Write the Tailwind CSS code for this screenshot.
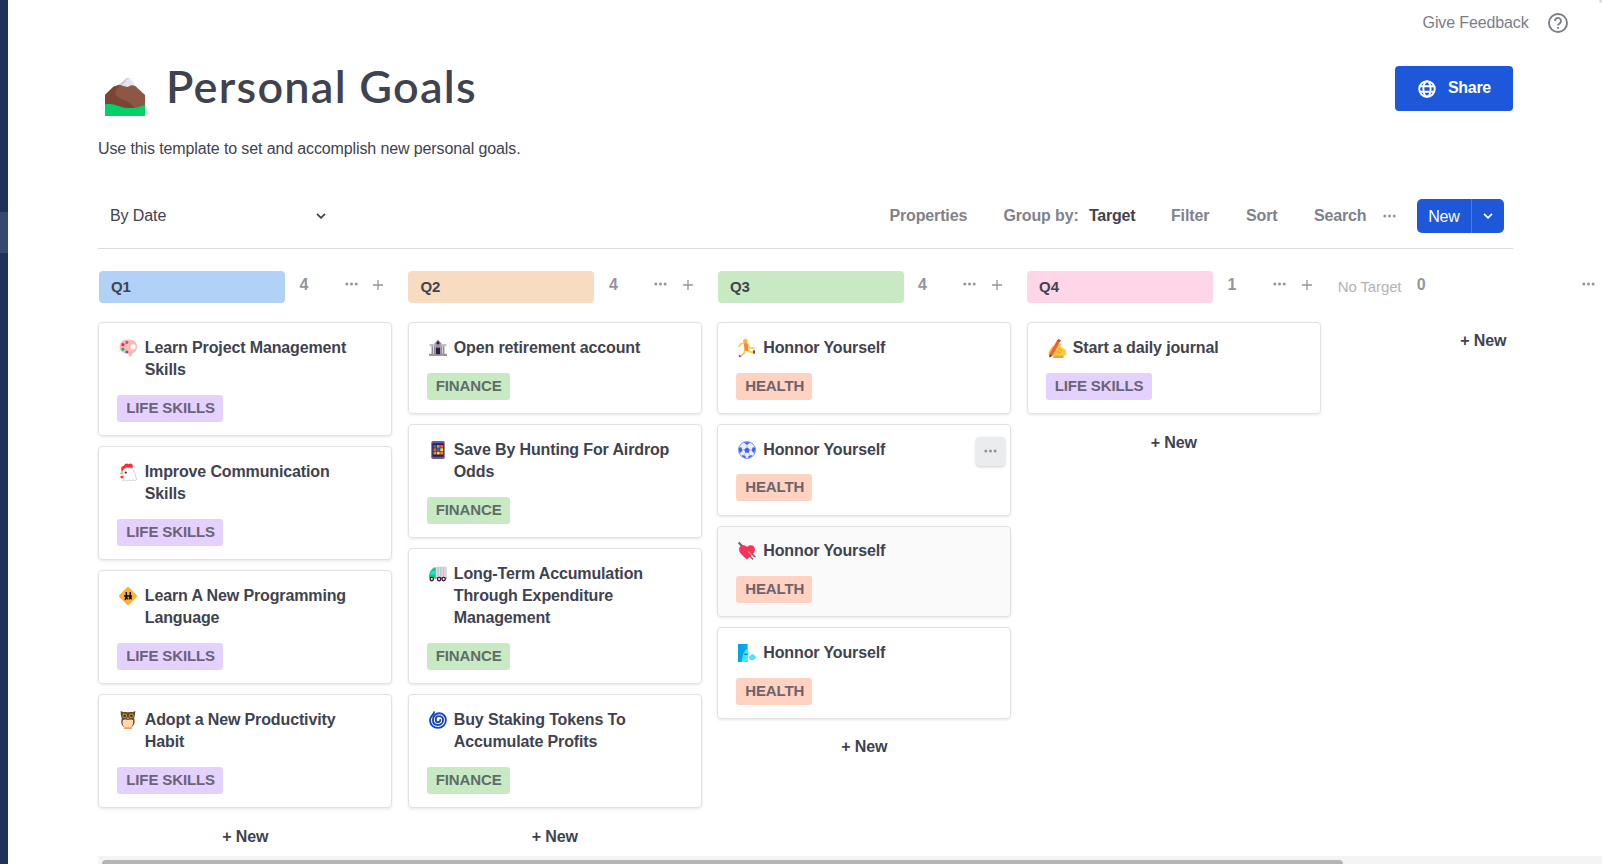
<!DOCTYPE html>
<html lang="en">
<head>
<meta charset="utf-8">
<title>Personal Goals</title>
<script src="https://cdn.jsdelivr.net/npm/@tailwindcss/browser@4"></script>
</head>
<body class="w-[1602px] h-[864px] overflow-hidden bg-white font-['Liberation_Sans',Arial,sans-serif] text-[16px] text-[#3f4350]">
<svg class="hidden" xmlns="http://www.w3.org/2000/svg">
  <symbol id="dots" viewBox="0 0 13 4"><g fill="currentColor"><circle cx="1.8" cy="2" r="1.5"/><circle cx="6.5" cy="2" r="1.5"/><circle cx="11.2" cy="2" r="1.5"/></g></symbol>
  <symbol id="plus" viewBox="0 0 10 10"><path d="M5 0v10M0 5h10" stroke="currentColor" stroke-width="1.3" fill="none"/></symbol>
  <symbol id="chev" viewBox="0 0 10 6"><path d="M1 .9l4 4 4-4" stroke="currentColor" stroke-width="1.7" fill="none"/></symbol>
  <symbol id="mountain" viewBox="0 0 39 38" preserveAspectRatio="none"><path d="M0 17 8 9 14 6.500 24 7 29 7.500 39 17V30H0z" fill="#8d5745"/><path d="M0 17 8 9l6-2-3 5c-3 5 1 7 7 10 6 2 9 5 12 10H0z" fill="#7c4434"/><path d="M14 6.500 21 .5c1-.7 2-.7 3 0L30 7.500l-4-.5-4 2-4-1z" fill="#e6e4ee"/><path d="M14 6.500 21 .5c1-.6 2-.6 3 0-2 0-3 1-4 3l-3 3z" fill="#c8c3d8"/><path d="M0 26.500c9-2 13 3 22 3.500 8 .3 12-1 17-3V38H0z" fill="#00d26a"/></symbol>
  <symbol id="palette" viewBox="0 0 32 32"><path d="M15 1C6 1 1 7 1 14c0 9 7 11 14 11 2 0 1 3 3 5 4 3 6-2 5-4 5-2 9-6 9-12C32 5 25 1 15 1z" fill="#ffb8ae"/><circle cx="25" cy="14" r="4.500" fill="#fff"/><circle cx="14" cy="6" r="2.700" fill="#8d65c5"/><circle cx="7" cy="10" r="2.700" fill="#f3148c"/><circle cx="7" cy="18" r="2.700" fill="#00c466"/><circle cx="14" cy="23" r="2.700" fill="#4a5cff"/></symbol>
  <symbol id="chicken" viewBox="0 0 32 32"><path d="M5 16C2 9 5 5 9 5c1-5 6-5 8-3 5-3 9 1 7 7l-8 4z" fill="#f92f38"/><path d="M6 15c2-5 6-7 11-7 8 0 12 8 14 22l-3 2-3-2-3 2-4-2-4 2-3-2-4 1c1-6 1-10-1-14z" fill="#fff" stroke="#b9b9bd" stroke-width="1.200"/><path d="M6 15 0 20h7z" fill="#ffb02e"/><circle cx="5" cy="25" r="2.500" fill="#f92f38"/><circle cx="12" cy="17" r="2" fill="#402a32"/></symbol>
  <symbol id="crossing" viewBox="0 0 32 32"><path d="M14 1q2-2 4 0l13 13q2 2 0 4L18 31q-2 2-4 0L1 18q-2-2 0-4z" fill="#ffb02e"/><g fill="none" stroke="#111" stroke-width="2.600"><path d="M9 16h14M13 9v7l-2 7M13 16l2 6M20 9v7l-2 6M20 15l2 7"/></g></symbol>
  <symbol id="owl" viewBox="0 0 32 32"><path d="M3 0c4 2 7 2 13 2s9 0 13-2c0 5-1 9-2 13l1 6c-1 6-4 9-7 10H11c-4-1-7-4-7-10l1-6C3 9 3 4 3 0z" fill="#6d4534"/><path d="M7 16q4-2 9 0 5-2 9 0c1 7-2 13-5 13h-8c-4 0-7-6-5-13z" fill="#ffdba8"/><circle cx="10" cy="8.500" r="4" fill="#c9ad29"/><circle cx="22" cy="8.500" r="4" fill="#c9ad29"/><circle cx="10" cy="8.500" r="2.400" fill="#333"/><circle cx="22" cy="8.500" r="2.400" fill="#333"/><path d="m16 10 2 4h-4zM9 29h14v3H9z" fill="#ff9a62"/></symbol>
  <symbol id="bank" viewBox="0 0 32 32"><path d="M10 8l6-7 6 7v3H10z" fill="#998ea4"/><path d="M1 9h30v4H1z" fill="#bebec2"/><path d="M4 13h24v14H4z" fill="#d4d3d6"/><path d="M6 13v14M10 13v14M22 13v14M26 13v14" stroke="#8b8792" stroke-width="2"/><path d="M11 9h10v5H11zM0 26h32v4H0z" fill="#9a97a2"/><path d="M12 15h8v12h-8z" fill="#321b41"/><circle cx="16" cy="7" r="2.600" fill="#321b41"/></symbol>
  <symbol id="phone" viewBox="0 0 32 32"><rect x="4" width="24" height="32" rx="3" fill="#6d5a9c"/><path d="M6 4h20v24H6z" fill="#2c1f4a"/><path d="M8 7h5v5H8zM14 13h5v5h-5z" fill="#0084ce"/><path d="M14 7h5v5h-5zM8 19h5v5H8zM20 19h5v5h-5z" fill="#ff822d"/><path d="M20 7h5v5h-5zM8 13h5v5H8z" fill="#f9563e"/><path d="M20 13h5v5h-5zM14 19h5v5h-5z" fill="#fcd53f"/></symbol>
  <symbol id="truck" viewBox="0 0 32 32"><path d="M12 3h20v19H12z" fill="#dcd9df"/><path d="M16 3v18M21 3v18M26 3v18" stroke="#b7b3bd" stroke-width="1.300"/><path d="M12 4C5 5 0 12 0 22h12z" fill="#00d26a"/><path d="M6 10h5v7H2c1-3 2-5 4-7z" fill="#2bd8e8"/><path d="M1 22h31v2H1z" fill="#d8517f"/><g fill="#fff" stroke="#321b41" stroke-width="2.300"><circle cx="5" cy="25" r="3"/><circle cx="18" cy="25" r="3"/><circle cx="26" cy="25" r="3"/></g></symbol>
  <symbol id="cyclone" viewBox="0 0 32 32"><g fill="none" stroke="#1345b7" stroke-width="3.300" stroke-linecap="round"><path d="M9 2C9 6 3 8 2 15c-1 9 6 15 14 15s14-6 14-14S24 4 18 4 7 9 7 16s4 9 9 9 9-4 9-9-4-7-8-7-5 3-5 6 2 5 4 5 4-2 4-4"/></g></symbol>
  <symbol id="runner" viewBox="0 0 32 32"><g fill="none" stroke-linecap="round" stroke-linejoin="round"><path d="M12 8H6l-4 5M18 10l3 6h8" stroke="#ffc83d" stroke-width="2.600"/><path d="M17 20l7 4 4-1M12 19l-1 6-6 5" stroke="#ffc83d" stroke-width="3"/><path d="M14 10l1 8" stroke="#ff822d" stroke-width="7"/></g><circle cx="13" cy="4" r="4" fill="#ffb02e"/><path d="M2 28l4 4-3 0-2-2zM27 20h3v6h-3z" fill="#533566"/></symbol>
  <symbol id="ball" viewBox="0 0 32 32"><circle cx="16" cy="16" r="15" fill="#eceff8" stroke="#5a76e8" stroke-width="1.400"/><path d="M16 11l5 4-2 6h-6l-2-6zM10 2h12l-6 5zM1 12l5-1 2 6-5 5zM31 12l-5-1-2 6 5 5zM8 25l5 1 1 5-7-4zM24 25l-5 1-1 5 7-4z" fill="#3f5fff"/><path d="M16 6v6M7 16l4-1M25 16l-4-1M13 21l-2 5M19 21l2 5" stroke="#a0a8cc"/></symbol>
  <symbol id="heart" viewBox="0 0 32 32"><path d="M1 1l8 8" stroke="#785b91" stroke-width="4"/><path d="M16 31C8 24 1 19 2 12c1-7 10-8 14-3 4-5 13-4 14 3 1 7-6 12-14 19z" fill="#f8315a"/><path d="M18 17l10 10" stroke="#fcae3d" stroke-width="2"/><path d="M25 21l6 6M21 25l6 6" stroke="#785b91" stroke-width="2.500"/></symbol>
  <symbol id="wind" viewBox="0 0 32 32"><path d="M0 0h17v32H0z" fill="#00a6ed"/><path d="M15 9c3 1 4 5 4 9-1 2 0 4-1 6s0 7-6 8H6c3-7 1-16 9-23z" fill="#50e2ff"/><path d="M11 17c2 2 4 2 6 0" stroke="#0074ba" stroke-width="1.800" fill="none"/><path d="M19 24c1-4 3-3 5-6 3-1 4 2 4 2 5 0 5 6 1 7-3 3-9 2-10-3z" fill="#50e2ff"/></symbol>
  <symbol id="writing" viewBox="0 0 32 32"><path d="M1 23C3 16 9 10 14 10l5-3c3 0 4 3 2 5l8 6c3 4 2 9-3 11H10C4 30 0 28 1 23z" fill="#ffc83d"/><path d="M18 16l6 4M16 21l6 3" stroke="#e8942d" stroke-width="1.500"/><path d="M16 1l5 2L8 27l-6 4 1-7z" fill="#f3602d"/><path d="M17 0l5 2-2 3-4-2z" fill="#d7493c"/><path d="M3 26l4 2-5 3z" fill="#5b3a34"/><path d="M9 28h17v4H9z" fill="#e8a23d"/></symbol>
</svg>
<div class="flex h-full">
  <!-- collapsed sidebar edge -->
  <aside class="w-2 shrink-0 bg-[#1f325c] pt-[212px]"><div class="h-[41px] bg-[#38496f]"></div></aside>
  <main class="relative w-[1594px] shrink-0 overflow-hidden flex flex-col pl-[90px]">
    <div class="absolute right-0 top-0 size-[3px] bg-linear-to-bl from-[#c8c8cc] to-white"></div>
    <div class="h-[46px] flex items-center justify-end gap-[19px] pr-[34.500px] text-[#7b7e88]">
      <span class="tracking-[-0.13px]">Give Feedback</span>
      <svg class="size-5" viewBox="0 0 20 20" fill="none" stroke="currentColor" stroke-width="1.9"><circle cx="10" cy="10" r="9"/><path d="M7 8a3 3 0 1 1 4.700 2.400C10.500 11.200 10 11.500 10 12.600M10 13.900v1.800"/></svg>
    </div>
    <div class="h-[80px] w-[1415px] flex justify-between">
      <div class="flex">
        <svg class="w-[40px] h-[38px] ml-[7px] mt-8"><use href="#mountain"/></svg>
        <h1 class="ml-[21px] mt-[13px] font-['Lato',sans-serif] font-semibold text-[45px] leading-[54px] tracking-[1.25px] whitespace-nowrap">Personal Goals</h1>
      </div>
      <button class="mt-5 w-[118px] h-[45px] rounded bg-[#1c58d9] text-white font-bold flex items-center pl-[23px] pb-0.5 gap-3">
        <svg class="size-[18px] mt-0.5" viewBox="0 0 18 18" fill="none" stroke="#fff" stroke-width="1.900"><circle cx="9" cy="9" r="7.800"/><ellipse cx="9" cy="9" rx="3.600" ry="7.800"/><path d="M1.500 6.300h15M1.500 11.700h15"/></svg>
        <span class="tracking-[-0.3px]">Share</span>
      </button>
    </div>
    <p class="h-[63px] pt-[11px] leading-6 tracking-[-0.12px]">Use this template to set and accomplish new personal goals.</p>
    <div class="w-[1415px] h-[60px] border-b border-[#dcdce0] flex items-center justify-between pb-0 text-[#7f828c] font-bold">
      <div class="w-[216px] ml-3 mt-[-6px] flex items-center justify-between text-[#3f4350] font-normal"><span class="tracking-[-0.1px]">By Date</span><svg class="w-[10px] h-[6px]"><use href="#chev"/></svg></div>
      <div class="flex items-center h-[34px] mt-[-5px] mr-[9px] whitespace-nowrap tracking-[-0.15px]">
        <span class="w-[114px]">Properties</span>
        <span class="w-[85.500px]">Group by:</span>
        <span class="w-[82px] text-[#3f4350] tracking-[-0.25px]">Target</span>
        <span class="w-[75px]">Filter</span>
        <span class="w-[68px]">Sort</span>
        <span class="w-[69px]">Search</span>
        <svg class="w-[13px] h-1 mr-[21px] text-[#9698a0]"><use href="#dots"/></svg>
        <button class="flex h-[34px] w-[87px] rounded-[5px] bg-[#1c58d9] text-white font-normal items-center"><span class="w-[54px] text-center pt-0.5">New</span><span class="w-px h-full bg-[#4a7ae2]"></span><svg class="w-[10px] h-[6px] ml-[11px]"><use href="#chev"/></svg></button>
      </div>
    </div>
    <div class="flex pt-[22px] h-[607px] pl-[0.300px] gap-[15.500px] leading-[22.400px] font-bold tracking-[-0.13px]">
      <!-- Q1 -->
      <section class="w-[294px] shrink-0">
        <div class="flex h-[51.400px] ml-[0.600px] text-[#93959c]">
          <div class="w-[186px] h-8 rounded bg-[#b1d1f6] pl-3 leading-8 text-[15px] text-[#3f4350]">Q1</div>
          <span class="ml-[14.500px] w-[45.500px] leading-[28px]">4</span><svg class="w-[13px] h-1 mt-[11px]"><use href="#dots"/></svg><svg class="size-[10px] ml-[15.500px] mt-[9px]"><use href="#plus"/></svg>
        </div>
        <div class="flex flex-col gap-[10px]">
          <article class="h-[114px] rounded border border-[#e2e2e5] shadow-[0_1px_3px_rgba(0,0,0,.1)] pl-[18px] pt-[13.700px]"><div class="flex gap-[7.500px]"><svg class="size-[18px] ml-[2px] mt-[2px] shrink-0"><use href="#palette"/></svg><h3>Learn Project Management<br>Skills</h3></div><span class="mt-[13.300px] inline-block h-[27px] rounded-[3px] bg-[#e5d1ff] pl-[9px] pr-[8.500px] leading-[25px] text-[15px] text-[#696478]">LIFE SKILLS</span></article>
          <article class="h-[114px] rounded border border-[#e2e2e5] shadow-[0_1px_3px_rgba(0,0,0,.1)] pl-[18px] pt-[13.700px]"><div class="flex gap-[7.500px]"><svg class="size-[18px] ml-[2px] mt-[2px] shrink-0"><use href="#chicken"/></svg><h3>Improve Communication<br>Skills</h3></div><span class="mt-[13.300px] inline-block h-[27px] rounded-[3px] bg-[#e5d1ff] pl-[9px] pr-[8.500px] leading-[25px] text-[15px] text-[#696478]">LIFE SKILLS</span></article>
          <article class="h-[114px] rounded border border-[#e2e2e5] shadow-[0_1px_3px_rgba(0,0,0,.1)] pl-[18px] pt-[13.700px]"><div class="flex gap-[7.500px]"><svg class="size-[18px] ml-[2px] mt-[2px] shrink-0"><use href="#crossing"/></svg><h3>Learn A New Programming<br>Language</h3></div><span class="mt-[13.300px] inline-block h-[27px] rounded-[3px] bg-[#e5d1ff] pl-[9px] pr-[8.500px] leading-[25px] text-[15px] text-[#696478]">LIFE SKILLS</span></article>
          <article class="h-[114px] rounded border border-[#e2e2e5] shadow-[0_1px_3px_rgba(0,0,0,.1)] pl-[18px] pt-[13.700px]"><div class="flex gap-[7.500px]"><svg class="size-[18px] ml-[2px] mt-[2px] shrink-0"><use href="#owl"/></svg><h3>Adopt a New Productivity<br>Habit</h3></div><span class="mt-[13.300px] inline-block h-[27px] rounded-[3px] bg-[#e5d1ff] pl-[9px] pr-[8.500px] leading-[25px] text-[15px] text-[#696478]">LIFE SKILLS</span></article>
          <div class="text-center pt-[7.600px]">+ New</div>
        </div>
      </section>
      <!-- Q2 -->
      <section class="w-[294px] shrink-0">
        <div class="flex h-[51.400px] ml-[0.600px] text-[#93959c]">
          <div class="w-[186px] h-8 rounded bg-[#f7dcc2] pl-3 leading-8 text-[15px] text-[#3f4350]">Q2</div>
          <span class="ml-[14.500px] w-[45px] leading-[28px]">4</span><svg class="w-[13px] h-1 mt-[11px]"><use href="#dots"/></svg><svg class="size-[10px] ml-[16px] mt-[9px]"><use href="#plus"/></svg>
        </div>
        <div class="flex flex-col gap-[10px]">
          <article class="h-[91.600px] rounded border border-[#e2e2e5] shadow-[0_1px_3px_rgba(0,0,0,.1)] pl-[18px] pt-[13.700px]"><div class="flex gap-[7px]"><svg class="size-[18px] ml-[2px] mt-[2px] shrink-0"><use href="#bank"/></svg><h3>Open retirement account</h3></div><span class="mt-[13.300px] inline-block h-[27px] rounded-[3px] bg-[#c7eac3] pl-[9px] pr-[8px] leading-[25px] text-[15px] text-[#5f6c69]">FINANCE</span></article>
          <article class="h-[114px] rounded border border-[#e2e2e5] shadow-[0_1px_3px_rgba(0,0,0,.1)] pl-[18px] pt-[13.700px]"><div class="flex gap-[7px]"><svg class="size-[18px] ml-[2px] mt-[2px] shrink-0"><use href="#phone"/></svg><h3>Save By Hunting For Airdrop<br>Odds</h3></div><span class="mt-[13.300px] inline-block h-[27px] rounded-[3px] bg-[#c7eac3] pl-[9px] pr-[8px] leading-[25px] text-[15px] text-[#5f6c69]">FINANCE</span></article>
          <article class="h-[136.400px] rounded border border-[#e2e2e5] shadow-[0_1px_3px_rgba(0,0,0,.1)] pl-[18px] pt-[13.700px]"><div class="flex gap-[7px]"><svg class="size-[18px] ml-[2px] mt-[2px] shrink-0"><use href="#truck"/></svg><h3>Long-Term Accumulation<br>Through Expenditure<br>Management</h3></div><span class="mt-[13.300px] inline-block h-[27px] rounded-[3px] bg-[#c7eac3] pl-[9px] pr-[8px] leading-[25px] text-[15px] text-[#5f6c69]">FINANCE</span></article>
          <article class="h-[114px] rounded border border-[#e2e2e5] shadow-[0_1px_3px_rgba(0,0,0,.1)] pl-[18px] pt-[13.700px]"><div class="flex gap-[7px]"><svg class="size-[18px] ml-[2px] mt-[2px] shrink-0"><use href="#cyclone"/></svg><h3>Buy Staking Tokens To<br>Accumulate Profits</h3></div><span class="mt-[13.300px] inline-block h-[27px] rounded-[3px] bg-[#c7eac3] pl-[9px] pr-[8px] leading-[25px] text-[15px] text-[#5f6c69]">FINANCE</span></article>
          <div class="text-center pt-[7.600px]">+ New</div>
        </div>
      </section>
      <!-- Q3 -->
      <section class="w-[294px] shrink-0">
        <div class="flex h-[51.400px] ml-[0.600px] text-[#93959c]">
          <div class="w-[186px] h-8 rounded bg-[#c7eac3] pl-3 leading-8 text-[15px] text-[#3f4350]">Q3</div>
          <span class="ml-[14px] w-[45.500px] leading-[28px]">4</span><svg class="w-[13px] h-1 mt-[11px]"><use href="#dots"/></svg><svg class="size-[10px] ml-[15.500px] mt-[9px]"><use href="#plus"/></svg>
        </div>
        <div class="flex flex-col gap-[10px]">
          <article class="h-[91.600px] rounded border border-[#e2e2e5] shadow-[0_1px_3px_rgba(0,0,0,.1)] pl-[18px] pt-[13.700px]"><div class="flex gap-[7px]"><svg class="size-[18px] ml-[2px] mt-[2px] shrink-0"><use href="#runner"/></svg><h3>Honnor Yourself</h3></div><span class="mt-[13.300px] inline-block h-[27px] rounded-[3px] bg-[#ffd2c1] pl-[9px] pr-[8px] leading-[25px] text-[15px] text-[#6d6369]">HEALTH</span></article>
          <article class="relative h-[91.600px] rounded border border-[#e2e2e5] shadow-[0_1px_3px_rgba(0,0,0,.1)] pl-[18px] pt-[13.700px]"><div class="flex gap-[7px]"><svg class="size-[18px] ml-[2px] mt-[2px] shrink-0"><use href="#ball"/></svg><h3>Honnor Yourself</h3></div><span class="mt-[13.300px] inline-block h-[27px] rounded-[3px] bg-[#ffd2c1] pl-[9px] pr-[8px] leading-[25px] text-[15px] text-[#6d6369]">HEALTH</span>
            <button class="absolute right-[5px] top-3 size-[29px] rounded bg-[#ebecee] shadow-[0_1px_3px_rgba(0,0,0,.2)] flex items-center justify-center text-[#93959c]"><svg class="w-[13px] h-1"><use href="#dots"/></svg></button></article>
          <article class="h-[91.600px] rounded border border-[#e2e2e5] bg-[#fafafa] shadow-[0_1px_3px_rgba(0,0,0,.1)] pl-[18px] pt-[13.700px]"><div class="flex gap-[7px]"><svg class="size-[18px] ml-[2px] mt-[2px] shrink-0"><use href="#heart"/></svg><h3>Honnor Yourself</h3></div><span class="mt-[13.300px] inline-block h-[27px] rounded-[3px] bg-[#ffd2c1] pl-[9px] pr-[8px] leading-[25px] text-[15px] text-[#6d6369]">HEALTH</span></article>
          <article class="h-[91.600px] rounded border border-[#e2e2e5] shadow-[0_1px_3px_rgba(0,0,0,.1)] pl-[18px] pt-[13.700px]"><div class="flex gap-[7px]"><svg class="size-[18px] ml-[2px] mt-[2px] shrink-0"><use href="#wind"/></svg><h3>Honnor Yourself</h3></div><span class="mt-[13.300px] inline-block h-[27px] rounded-[3px] bg-[#ffd2c1] pl-[9px] pr-[8px] leading-[25px] text-[15px] text-[#6d6369]">HEALTH</span></article>
          <div class="text-center pt-[7.600px]">+ New</div>
        </div>
      </section>
      <!-- Q4 -->
      <section class="w-[294px] shrink-0">
        <div class="flex h-[51.400px] ml-[0.300px] text-[#93959c]">
          <div class="w-[186px] h-8 rounded bg-[#ffd5e8] pl-3 leading-8 text-[15px] text-[#3f4350]">Q4</div>
          <span class="ml-[14.500px] w-[45.500px] leading-[28px]">1</span><svg class="w-[13px] h-1 mt-[11px]"><use href="#dots"/></svg><svg class="size-[10px] ml-[15.500px] mt-[9px]"><use href="#plus"/></svg>
        </div>
        <div class="flex flex-col gap-[10px]">
          <article class="h-[91.600px] rounded border border-[#e2e2e5] shadow-[0_1px_3px_rgba(0,0,0,.1)] pl-[18px] pt-[13.700px]"><div class="flex gap-[6px]"><svg class="size-[19px] ml-[2px] mt-[2px] shrink-0"><use href="#writing"/></svg><h3>Start a daily journal</h3></div><span class="mt-[13.300px] inline-block h-[27px] rounded-[3px] bg-[#e5d1ff] pl-[9px] pr-[8.500px] leading-[25px] text-[15px] text-[#696478]">LIFE SKILLS</span></article>
          <div class="text-center pt-[7.600px]">+ New</div>
        </div>
      </section>
      <!-- Ungrouped cards -->
      <section class="w-[294px] shrink-0">
        <div class="flex h-[51.400px] text-[#93959c]">
          <div class="w-[65px] ml-[1.500px] leading-8 text-[15px] font-normal text-[#b2b3b8] whitespace-nowrap">No Target</div>
          <span class="ml-[14px] w-[165.500px] leading-[28px]">0</span><svg class="w-[13px] h-1 mt-[11px]"><use href="#dots"/></svg>
        </div>
        <div class="text-center pt-[7.600px]">+ New</div>
      </section>
    </div>
    <!-- horizontal scrollbar -->
    <div class="h-[8px] shrink-0 bg-[#f4f4f4] pt-1 pl-1 overflow-hidden"><div class="w-[1241px] h-2 rounded-t-[4px] bg-[#b5b5b5]"></div></div>
  </main>
</div>
</body>
</html>
